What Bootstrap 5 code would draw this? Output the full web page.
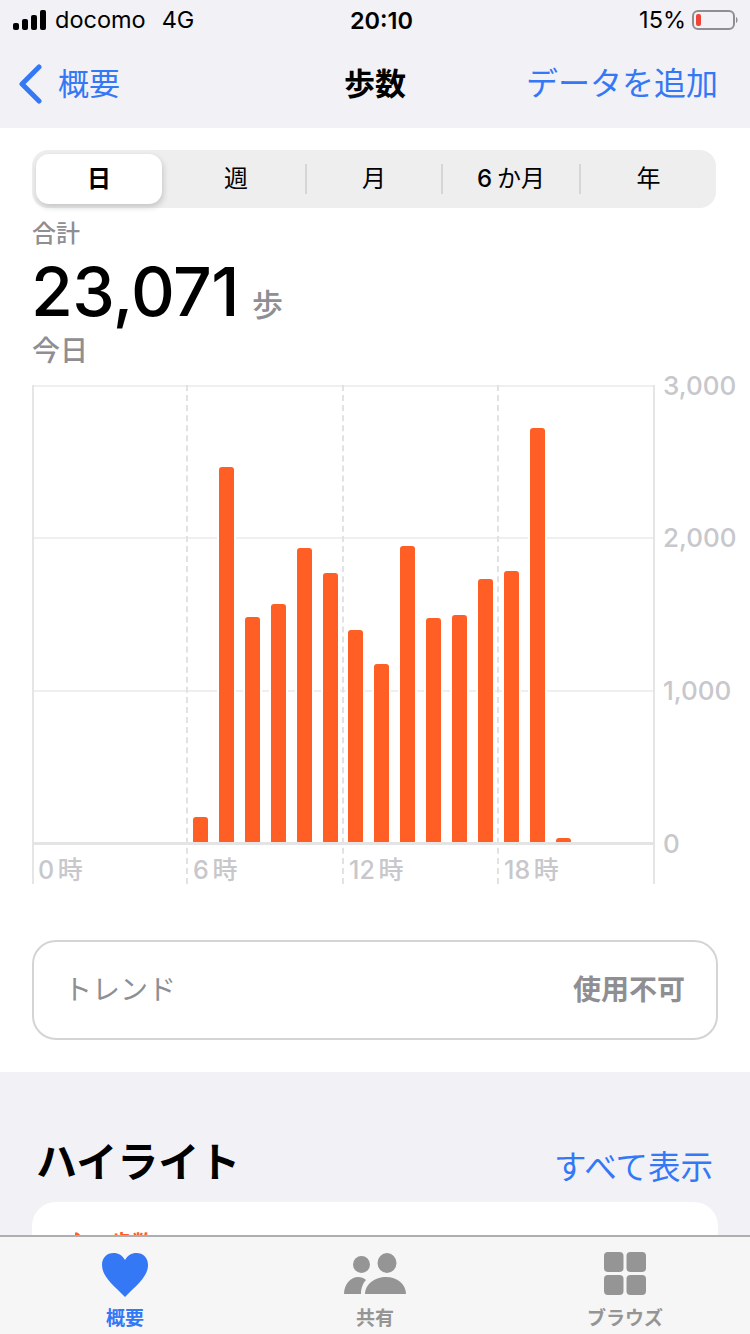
<!DOCTYPE html>
<html lang="ja">
  <head>
    <meta charset="UTF-8" />
    <meta name="viewport" content="width=device-width, initial-scale=1.0" />
    <title>歩数</title>
    <link href="https://cdn.jsdelivr.net/npm/bootstrap@5.3.3/dist/css/bootstrap.min.css" rel="stylesheet" />
    <style>
      body {
        width: 750px;
        height: 1334px;
        overflow: hidden;
        background: #f1f1f6;
        font-family: Inter, "Noto Sans CJK JP", sans-serif;
        color: #000;
      }
      .app-blue { color: #3478f6; }
      .app-gray { color: #8e8e93; }

      .status-bar { height: 40px; padding: 0 12px 0 13px; font-size: 23.5px; line-height: 42px; }
      .status-left { width: 312px; gap: 8px; }
      .status-right { width: 300px; gap: 6px; }
      .status-time { width: 100px; text-align: center; font-weight: 600; }
      .nav-bar { height: 88px; padding: 0 32px 0 19px; font-size: 31px; }
      .nav-left { width: 313px; gap: 15px; }
      .nav-right { width: 300px; font-size: 32px; }
      .nav-title { font-weight: 700; }

      .scroll-area { height: 1107px; overflow: hidden; }
      .panel-white { height: 944px; background: #fff; padding: 22px 32px 0; }

      .segment-bar { height: 58px; width: 684px; background: #eeeeef; border-radius: 16px; padding: 4px; font-size: 24px; }
      .segment-item { flex: none; text-align: center; }
      .segment-w1 { width: 138px; }
      .segment-w2 { width: 134px; }
      .segment-w3 { width: 136px; }
      .segment-w4 { width: 135px; }
      .segment-six { font-weight: 500; margin-right: -2px; }
      .segment-on { flex: none; width: 126px; height: 50px; background: #fff; border-radius: 13px; box-shadow: 1px 3px 6px rgba(0,0,0,.18); font-weight: 600; margin-right: 5px; }
      .segment-gap { flex: none; width: 2px; height: 30px; background: #d6d6d8; }

      .sum-label { font-size: 24px; line-height: 30px; margin-top: 11px; font-weight: 500; }
      .sum-value { font-size: 68px; line-height: 80px; font-weight: 500; letter-spacing: -.6px; margin-top: 2px; margin-left: -1px; }
      .sum-unit { font-size: 31px; line-height: 1; font-weight: 500; margin-left: 13px; letter-spacing: 0; }
      .sum-day { font-size: 28px; line-height: 36px; font-weight: 500; margin-top: 2px; margin-bottom: 16px; }

      .chart-box { width: 700px; height: 500px; position: relative; }
      .grid-h { position: absolute; left: 0; width: 622px; height: 2px; background: #efefef; }
      .grid-base { background: #e4e4e4; height: 3px; z-index: 2; }
      .grid-v { position: absolute; top: 0; height: 499px; width: 0; border-left: 2px dashed #e2e2e2; }
      .grid-edge { border-left: 2px solid #e5e5e5; }
      .bar-row {
        position: absolute; left: 0; top: 0; width: 622px; height: 458px;
        display: grid; grid-template-columns: repeat(24, 1fr); align-items: end; z-index: 1;
      }
      .step-bar {
        width: 15px; margin-left: 5.500px; background: #ff5e25; border-radius: 3px 3px 0 0;
        box-shadow: 0 0 0 2px #fff;
      }
      .axis-y { position: absolute; left: 631px; font-size: 26px; line-height: 30px; color: #c7c7cc; font-weight: 500; }
      .axis-x { position: absolute; top: 470px; font-size: 25px; line-height: 30px; color: #c7c7cc; font-weight: 500; word-spacing: -3px; }

      .trend-card {
        width: 686px; height: 100px; margin-top: 55px; padding: 0 31px 0 30px;
        border: 2px solid #d4d4d6; border-radius: 24px; font-size: 28px;
      }
      .trend-value { font-weight: 700; }

      .section-head { padding: 66px 37px 0 36px; height: 130px; }
      .section-title { font-size: 41px; font-weight: 700; line-height: 48px; }
      .section-link { font-size: 32.500px; margin-top: 6px; }
      .hl-card { margin-left: 32px; width: 686px; height: 200px; background: #fff; border-radius: 24px; padding: 26px 43px; color: #ff5e25; font-size: 21px; line-height: 30px; font-weight: 600; gap: 24px; }
      .hl-mark { margin-top: 4px; }

      .tab-bar { height: 99px; background: #f7f6f6; border-top: 2px solid #aeaeb0; }
      .tab-item { width: 250px; padding-top: 15px; color: #959595; }
      .tab-item.tab-on { color: #3478f6; }
      .tab-item svg { display: block; height: 46px; }
      .tab-label { font-size: 19px; line-height: 24px; margin-top: 9px; font-weight: 700; }
    </style>
  </head>

  <body>
    <!-- status bar -->
    <div class="status-bar d-flex justify-content-between">
      <div class="status-left d-flex align-items-center">
        <svg width="34" height="20" viewBox="0 0 34 20" fill="#000"><rect x="0" y="13" width="6" height="7" rx="2"/><rect x="9" y="9" width="6" height="11" rx="2"/><rect x="18" y="5" width="6" height="15" rx="2"/><rect x="27" y="0" width="6" height="20" rx="2"/></svg>
        <span>docomo</span><span class="ms-2">4G</span>
      </div>
      <div class="status-time">20:10</div>
      <div class="status-right d-flex align-items-center justify-content-end">
        <span>15%</span>
        <svg width="46" height="20" viewBox="0 0 46 20"><rect x="1" y="1" width="41" height="18" rx="5" fill="none" stroke="#8e8e93" stroke-width="2"/><rect x="4" y="4" width="5" height="12" rx="2" fill="#f04438"/><path d="M44 7c2 .5 2 5.500 0 6z" fill="#8e8e93"/></svg>
      </div>
    </div>

    <!-- nav -->
    <div class="nav-bar d-flex justify-content-between align-items-center">
      <div class="nav-left d-flex align-items-center app-blue">
        <svg width="24" height="40" viewBox="0 0 24 40" fill="none" stroke="#3478f6" stroke-width="5" stroke-linecap="round" stroke-linejoin="round"><path d="M20 3 3 20l17 17"/></svg>
        <span>概要</span>
      </div>
      <div class="nav-title">歩数</div>
      <div class="nav-right text-end app-blue">データを追加</div>
    </div>

    <div class="scroll-area">
      <div class="panel-white">
        <div class="segment-bar d-flex align-items-center">
          <div class="segment-on d-flex align-items-center justify-content-center">日</div>
          <div class="segment-item segment-w1">週</div>
          <div class="segment-gap"></div>
          <div class="segment-item segment-w2">月</div>
          <div class="segment-gap"></div>
          <div class="segment-item segment-w3"><span class="segment-six">6</span> か月</div>
          <div class="segment-gap"></div>
          <div class="segment-item segment-w4">年</div>
        </div>

        <div class="sum-label app-gray">合計</div>
        <div class="sum-value d-flex align-items-baseline">23,071<span class="sum-unit app-gray">歩</span></div>
        <div class="sum-day app-gray">今日</div>

        <div class="chart-box" id="chart"></div>

        <div class="trend-card d-flex justify-content-between align-items-center">
          <span class="app-gray">トレンド</span>
          <span class="trend-value app-gray">使用不可</span>
        </div>
      </div>

      <div class="section-head d-flex justify-content-between align-items-start">
        <div class="section-title">ハイライト</div>
        <div class="section-link app-blue">すべて表示</div>
      </div>
      <div class="hl-card d-flex align-items-start">
        <svg class="hl-mark" width="12" height="20" viewBox="0 0 12 20" fill="#ff5e25"><path d="M0 2c0-2 1-2 3-1l8 7-8 12H0z"/></svg>
        <span>歩数</span>
      </div>
    </div>

    <!-- tabs -->
    <div class="tab-bar d-flex">
      <div class="tab-item tab-on d-flex flex-column align-items-center">
        <svg width="48" height="46" viewBox="0 0 48 46" fill="#3478f6"><path d="M24 45C11 32 1 24 1 13 1 5.500 6 1 12.500 1 17.500 1 21.500 3.500 24 8 26.500 3.500 30.500 1 35.500 1 42 1 47 5.500 47 13 47 24 37 32 24 45z"/></svg>
        <div class="tab-label">概要</div>
      </div>
      <div class="tab-item d-flex flex-column align-items-center">
        <svg width="64" height="46" viewBox="0 0 64 46" fill="#959595"><ellipse cx="18.500" cy="12.500" rx="8.500" ry="8.500"/><ellipse cx="44" cy="11" rx="9.500" ry="10"/><path d="M1 42C1 32 8 25 15 25c3 0 6 1 8 3-3 3-5 8-5 14z"/><path d="M22 42c0-10 10-17 21-17s20 7 20 17z"/></svg>
        <div class="tab-label">共有</div>
      </div>
      <div class="tab-item d-flex flex-column align-items-center">
        <svg width="44" height="46" viewBox="0 0 44 46" fill="#959595"><rect x="1" y="0" width="19.500" height="20" rx="4"/><rect x="23.500" y="0" width="19.500" height="20" rx="4"/><rect x="1" y="23" width="19.500" height="20" rx="4"/><rect x="23.500" y="23" width="19.500" height="20" rx="4"/></svg>
        <div class="tab-label">ブラウズ</div>
      </div>
    </div>

    <script src="https://cdn.jsdelivr.net/npm/bootstrap@5.3.3/dist/js/bootstrap.bundle.min.js"></script>
    <script>
      // hourly steps as pixel heights of the bars
      const heights = { 6: 26, 7: 376, 8: 226, 9: 239, 10: 295, 11: 270, 12: 213, 13: 179, 14: 297, 15: 225, 16: 228, 17: 264, 18: 272, 19: 415, 20: 5 };
      let html = "";

      [0, 152, 305].forEach((y) => {
        html += `<div class="grid-h" style="top:${y}px"></div>`;
      });
      html += `<div class="grid-h grid-base" style="top:457px"></div>`;
      html += `<div class="grid-v grid-edge" style="left:0"></div>`;
      html += `<div class="grid-v grid-edge" style="left:621px"></div>`;
      [154, 310, 465].forEach((x) => {
        html += `<div class="grid-v" style="left:${x}px"></div>`;
      });

      let bars = "";
      for (let h = 0; h < 24; h++) {
        bars += heights[h]
          ? `<div class="step-bar" style="height:${heights[h]}px"></div>`
          : "<div></div>";
      }
      html += `<div class="bar-row">${bars}</div>`;

      [["3,000", -14], ["2,000", 138], ["1,000", 291], ["0", 444]].forEach(([t, y]) => {
        html += `<div class="axis-y" style="top:${y}px">${t}</div>`;
      });
      [["0 時", 6], ["6 時", 161], ["12 時", 317], ["18 時", 472]].forEach(([t, x]) => {
        html += `<div class="axis-x" style="left:${x}px">${t}</div>`;
      });
      document.getElementById("chart").innerHTML = html;
    </script>
  </body>
</html>
